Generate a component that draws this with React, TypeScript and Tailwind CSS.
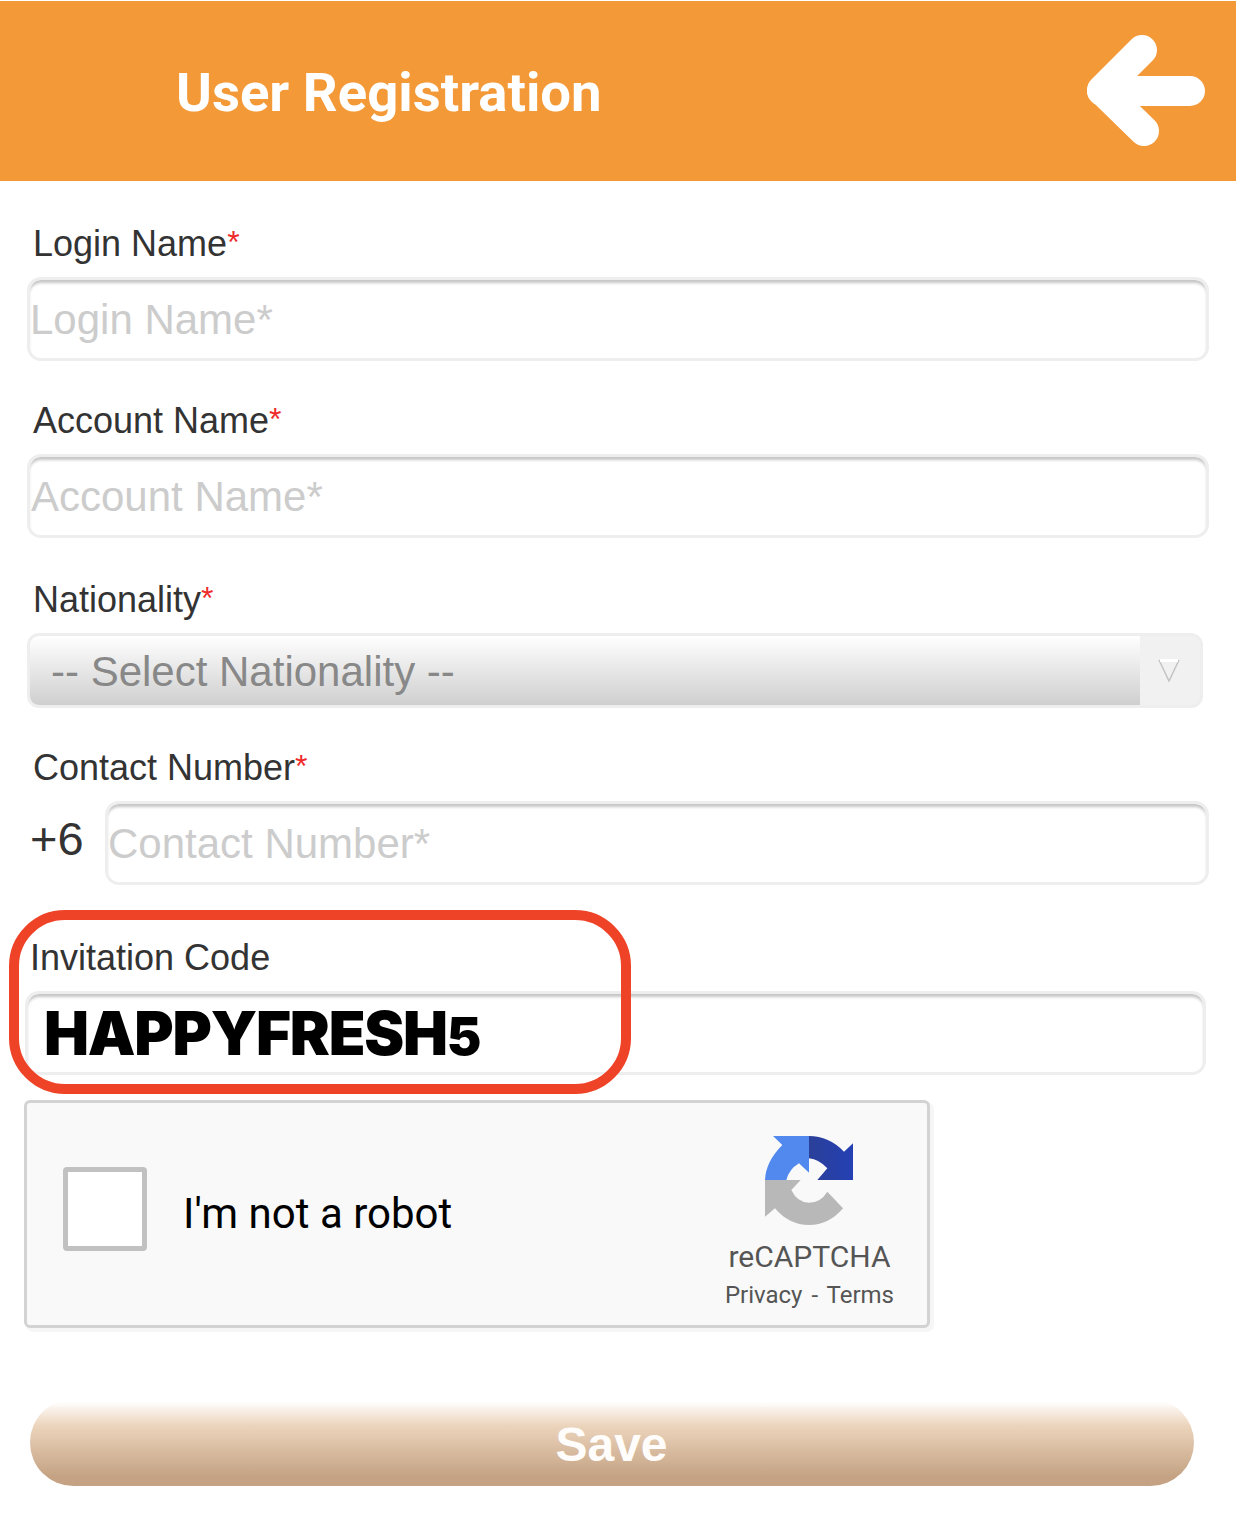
export default function App() {
  const star = <span className="text-[#ee2a2a] text-[32px] leading-[0] align-[3px]">*</span>;
  const label = "block h-[36px] text-[36px] leading-[36px] text-[#333]";
  const box = "block h-[84px] border-[3px] border-[#efeeef] rounded-[14px] bg-white shadow-[inset_0_4px_3px_-1px_#c6c6c6] text-[42px] outline-none placeholder:text-[#cccccc]";
  return (
    <div className="relative w-[1236px] h-[1522px] bg-white overflow-hidden font-['Liberation_Sans',sans-serif]">
      <header className="mt-px h-[180px] bg-[#f39937] flex items-center justify-between pl-[176px] pr-[30px]">
        <h1 className="font-['Roboto',sans-serif] font-bold text-[54.5px] leading-none text-white mt-[2px]">User Registration</h1>
        <svg width="120" height="112" viewBox="1086 35 120 112" fill="none" stroke="#fff" strokeWidth="30" strokeLinecap="round" strokeLinejoin="round">
          <path d="M1190 91H1102" />
          <path d="M1142 50L1102 90L1144 131" />
        </svg>
      </header>

      <main className="pt-[45px]">
        <div className="px-[27px]">
          <label className={`${label} pl-[6px]`}>Login Name{star}</label>
          <input className={`${box} w-full mt-[15px] pt-[2px]`} placeholder="Login Name*" />
        </div>

        <div className="px-[27px] mt-[42px]">
          <label className={`${label} pl-[6px]`}>Account Name{star}</label>
          <input className={`${box} w-full mt-[15px] pt-[2px] pl-[1px]`} placeholder="Account Name*" />
        </div>

        <div className="pl-[27px] pr-[33px] mt-[44px]">
          <label className={`${label} pl-[6px]`}>Nationality{star}</label>
          <div className="mt-[15px] h-[75px] flex border-[3px] border-[#efeeef] rounded-[12px] bg-[#f2f1f2] overflow-hidden">
            <div className="flex-1 bg-gradient-to-b from-white to-[#cfcfcf] pl-[21px] text-[42px] leading-[71px] text-[#888888]">-- Select Nationality --</div>
            <div className="w-[60px] flex items-center justify-center">
              <svg width="22" height="23" viewBox="0 0 22 23" fill="none" strokeWidth="1.5" className="-ml-[2px]">
                <path d="M1 1L11 22L21 1" stroke="#c4c2c4" />
                <path d="M2 1.5H20" stroke="#ffffff" strokeWidth="3" />
              </svg>
            </div>
          </div>
        </div>

        <div className="px-[27px] mt-[42px]">
          <label className={`${label} pl-[6px]`}>Contact Number{star}</label>
          <div className="mt-[15px] flex">
            <span className="w-[78px] pl-[3px] text-[47px] leading-[75px] text-[#333]">+6</span>
            <input className={`${box} flex-1 pt-[2px]`} placeholder="Contact Number*" />
          </div>
        </div>

        <div className="pl-[25px] pr-[30px] mt-[55px]">
          <label className={`${label} pl-[5px]`}>Invitation Code</label>
          <div className={`${box} mt-[15px] pl-[16px] flex items-center`}>
            <span className="font-['Inter',sans-serif] font-black text-[60px] leading-none text-black tracking-[-1.2px]">
              HAPPYFRESH<span className="text-[52px]">5</span>
            </span>
          </div>
        </div>

        <div className="ml-[24px] mt-[25px] w-[906px] h-[228px] flex items-center border-[3px] border-[#d3d3d3] rounded-[6px] bg-[#f9f9f9] shadow-[3px_3px_0_1px_#f6f6f6] font-['Roboto',sans-serif]">
          <div className="ml-[36px] w-[84px] h-[84px] -mt-[10px] border-[5px] border-[#c1c1c1] rounded-[4px] bg-white" />
          <span className="ml-[36px] text-[42px] text-black -mt-[1px] leading-none">I'm not a robot</span>
          <div className="ml-auto mr-[33px] self-start mt-[32px] flex flex-col items-center text-[#555]">
            <svg width="88" height="90" viewBox="198 75 264 270">
              <defs>
                <linearGradient id="rcDark" x1="0" y1="0" x2="1" y2="0">
                  <stop offset="0" stopColor="#2b4099" />
                  <stop offset="1" stopColor="#2440b3" />
                </linearGradient>
              </defs>
              <path d="M198 210Q200 155 250 105L222 78H330V188L300 160Q270 178 262 210Z" fill="#5289ee" />
              <path d="M330 78Q390 78 435 125L462 100V210H355L385 175Q360 148 330 145Z" fill="url(#rcDark)" />
              <path d="M198 210H305L277 240Q295 278 330 278Q365 278 385 245L432 295Q390 345 330 345Q270 345 228 295L198 320Z" fill="#b8b8b8" />
            </svg>
            <span className="mt-[14px] text-[30px] leading-[36px]">reCAPTCHA</span>
            <span className="mt-[5px] text-[24px] leading-[30px] whitespace-pre [word-spacing:3px]">Privacy - Terms</span>
          </div>
        </div>

        <button className="block ml-[30px] mt-[71px] w-[1164px] h-[87px] pt-[4px] pr-px rounded-[44px] bg-gradient-to-b from-white from-[3%] via-[#ecd5bd] via-[30%] to-[#c4a283] to-[90%] text-[48px] font-bold text-[#fffdfb] leading-none">Save</button>
      </main>

      <div className="absolute left-[9px] top-[910px] w-[622px] h-[184px] border-[10px] border-[#ee4327] rounded-[56px]" />
    </div>
  );
}
